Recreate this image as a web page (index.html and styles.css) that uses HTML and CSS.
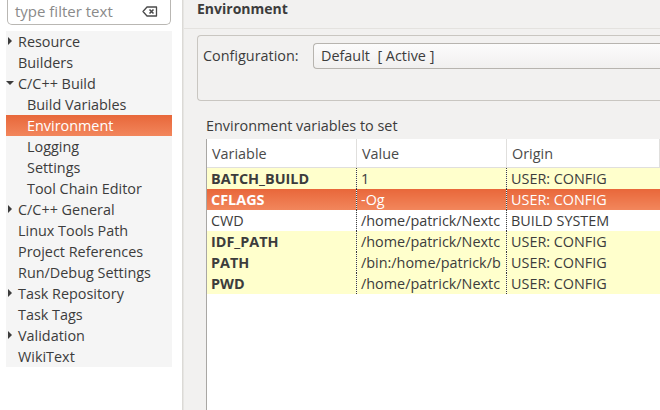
FILE: index.html
```html
<!DOCTYPE html>
<html lang="en">

<head>
  <meta charset="UTF-8">
  <title>Properties - Environment</title>
  <link rel="stylesheet" href="styles.css">
</head>

<body>
  <div class="window">
    <div class="nav-pane">
      <div class="filter">
        <span class="filter-text">type filter text</span>
        <svg class="clear-icon" width="16" height="11" viewBox="0 0 16 11">
          <path d="M5 1 H14.5 V10 H5 L1 5.5 Z" fill="none" stroke="#4a4a4a" stroke-width="1.3" stroke-linejoin="round"/>
          <path d="M7.5 3.5 L11.5 7.5 M11.5 3.5 L7.5 7.5" stroke="#4a4a4a" stroke-width="1.6"/>
        </svg>
      </div>
      <ul class="tree">
        <li class="item collapsed">Resource</li>
        <li class="item">Builders</li>
        <li class="item expanded">C/C++ Build</li>
        <li class="item child">Build Variables</li>
        <li class="item child selected">Environment</li>
        <li class="item child">Logging</li>
        <li class="item child">Settings</li>
        <li class="item child">Tool Chain Editor</li>
        <li class="item collapsed">C/C++ General</li>
        <li class="item">Linux Tools Path</li>
        <li class="item">Project References</li>
        <li class="item">Run/Debug Settings</li>
        <li class="item collapsed">Task Repository</li>
        <li class="item">Task Tags</li>
        <li class="item collapsed">Validation</li>
        <li class="item">WikiText</li>
      </ul>
    </div>

    <div class="sash"></div>

    <div class="page">
      <div class="page-title">Environment</div>

      <div class="config-group">
        <span class="config-label">Configuration:</span>
        <div class="combo">Default&nbsp; [ Active ]</div>
      </div>

      <div class="section-label">Environment variables to set</div>

      <div class="table-wrap">
        <table class="env-table">
          <thead>
            <tr>
              <th class="col-var">Variable</th>
              <th class="col-val">Value</th>
              <th>Origin</th>
            </tr>
          </thead>
          <tbody>
            <tr class="user">
              <td class="name">BATCH_BUILD</td>
              <td>1</td>
              <td>USER: CONFIG</td>
            </tr>
            <tr class="user selected">
              <td class="name">CFLAGS</td>
              <td>-Og</td>
              <td>USER: CONFIG</td>
            </tr>
            <tr>
              <td>CWD</td>
              <td>/home/patrick/Nextc</td>
              <td>BUILD SYSTEM</td>
            </tr>
            <tr class="user">
              <td class="name">IDF_PATH</td>
              <td>/home/patrick/Nextc</td>
              <td>USER: CONFIG</td>
            </tr>
            <tr class="user">
              <td class="name">PATH</td>
              <td>/bin:/home/patrick/b</td>
              <td>USER: CONFIG</td>
            </tr>
            <tr class="user">
              <td class="name">PWD</td>
              <td>/home/patrick/Nextc</td>
              <td>USER: CONFIG</td>
            </tr>
          </tbody>
        </table>
      </div>
    </div>
  </div>
</body>

</html>
```

FILE: styles.css
```css
body {
  margin: 0;
  padding: 0;
  font-family: "Open Sans", "DejaVu Sans", sans-serif;
  font-size: 14.4px;
  color: #3c3c3c;
  background: #ffffff;
}

.window {
  display: flex;
  width: 660px;
  height: 410px;
  overflow: hidden;
}

/* left navigation */
.nav-pane {
  width: 182px;
  flex-shrink: 0;
  background: #ffffff;
}

.filter {
  display: flex;
  align-items: center;
  justify-content: space-between;
  box-sizing: border-box;
  margin-left: 7px;
  width: 164px;
  height: 25px;
  padding: 0 12px 0 7px;
  border: 1px solid #b9b7b3;
  border-top: none;
  border-radius: 0 0 5px 5px;
  background: #ffffff;
}

.filter-text {
  color: #8a8a8a;
  font-size: 15px;
  margin-top: -2px;
}

.clear-icon {
  margin-top: -1px;
}

.tree {
  list-style: none;
  margin: 6px 0 0 6px;
  padding: 0;
  width: 166px;
  background: #f5f5f5;
}

.item {
  position: relative;
  height: 21px;
  line-height: 21px;
  padding-left: 12px;
  white-space: nowrap;
}

.item.child {
  padding-left: 21px;
}

.item.collapsed::before {
  content: "";
  position: absolute;
  left: 2px;
  top: 6px;
  border-left: 4px solid #3c3c3c;
  border-top: 4px solid transparent;
  border-bottom: 4px solid transparent;
}

.item.expanded::before {
  content: "";
  position: absolute;
  left: 0;
  top: 8px;
  border-top: 4px solid #3c3c3c;
  border-left: 4px solid transparent;
  border-right: 4px solid transparent;
}

.item.selected {
  color: #ffffff;
  background: linear-gradient(#e8673a, #f2865c);
}

.sash {
  width: 2px;
  flex-shrink: 0;
  background: linear-gradient(90deg, #d6d4d0, #ecebe9);
}

/* right page */
.page {
  flex: 1;
  min-width: 0;
  background: #f2f1f0;
  display: flex;
  flex-direction: column;
}

.page-title {
  box-sizing: border-box;
  height: 29px;
  padding: 0 0 0 13px;
  line-height: 18px;
  font-size: 14px;
  font-weight: bold;
  color: #3c3c3c;
  border-bottom: 1px solid #e4e2df;
}

.config-group {
  display: flex;
  align-items: flex-start;
  box-sizing: border-box;
  margin: 6px 0 0 13px;
  height: 66px;
  padding: 7px 0 0 5px;
  border: 1px solid #c9c6c1;
  border-right: none;
  border-radius: 4px 0 0 4px;
}

.config-label {
  line-height: 25px;
  width: 110px;
}

.combo {
  flex: 1;
  box-sizing: border-box;
  height: 26px;
  line-height: 24px;
  padding-left: 7px;
  border: 1px solid #b7b4af;
  border-right: none;
  border-radius: 4px 0 0 4px;
  background: linear-gradient(#fcfcfc, #f1f0ef);
}

.section-label {
  margin: 16px 0 0 22px;
  height: 22px;
  line-height: 18px;
}

.table-wrap {
  flex: 1;
  margin-left: 22px;
  border-left: 1px solid #a9a7a4;
  background: #ffffff;
}

.env-table {
  border-collapse: collapse;
  table-layout: fixed;
  width: 100%;
}

.env-table th {
  height: 28px;
  padding: 0 0 0 5px;
  text-align: left;
  font-weight: normal;
  color: #4a4a4a;
  border-right: 1px solid #e0dfdd;
  border-bottom: 1px solid #e0dfdd;
  background: #ffffff;
}

.col-var,
.col-val {
  width: 144px;
}

.env-table td {
  height: 21px;
  padding: 0 0 0 4px;
  white-space: nowrap;
  overflow: hidden;
  border-right: 1px dotted #3a3a3a;
  line-height: 20px;
}

.env-table td:last-child {
  border-right: none;
}

.env-table tr.user td {
  background: #ffffcc;
}

.env-table td.name {
  font-weight: bold;
}

.env-table tr.selected td {
  color: #ffffff;
  background: linear-gradient(#e8673a, #f2865c);
}
```
